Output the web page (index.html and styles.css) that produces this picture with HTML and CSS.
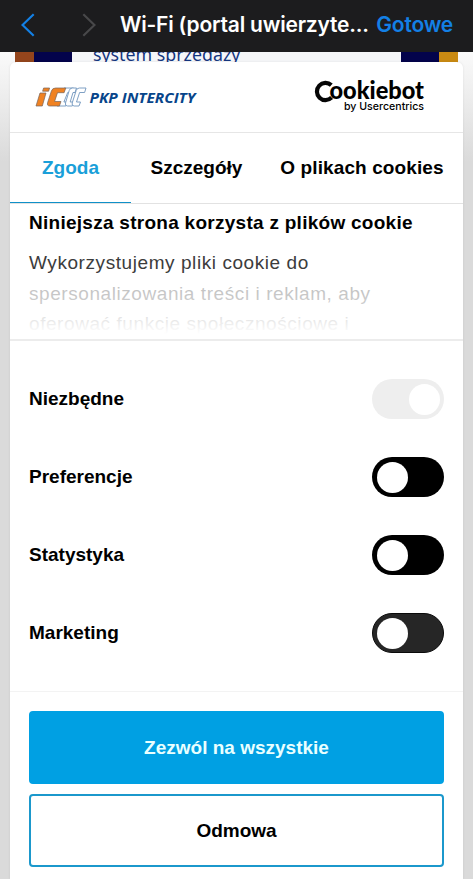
FILE: index.html
```
<!DOCTYPE html>
<html lang="pl">
  <head>
    <meta charset="UTF-8" />
    <meta name="viewport" content="width=device-width, initial-scale=1.0" />
    <title>Wi-Fi (portal uwierzytelniania)</title>
    <link rel="stylesheet" href="styles.css">
  </head>
  <body>
    <header class="navbar">
      <svg class="chevron back" width="14" height="24" viewBox="0 0 14 24">
        <path d="M12.7 1.3 1.5 12l11.2 10.7" />
      </svg>
      <svg class="chevron forward" width="14" height="24" viewBox="0 0 14 24">
        <path d="M1.3 1.3 12.5 12 1.3 22.7" />
      </svg>
      <div class="navbar-title">Wi-Fi (portal uwierzyte...</div>
      <a class="navbar-done">Gotowe</a>
    </header>

    <main class="page">
      <div class="banner">
        <span class="block brown"></span>
        <span class="block navy"></span>
        <span class="banner-text">system sprzedaży</span>
        <span class="block navy"></span>
        <span class="block gold"></span>
      </div>

      <div class="dialog">
        <div class="dialog-header">
          <svg class="logo" width="164" height="24" viewBox="0 0 164 24">
            <g class="logo-outline">
              <path d="M29 3h9.500l-1.800 4.500h-4L28.900 17h3.600l-1.700 4H22" />
              <path d="M41.500 3h-4q-2.500 0-3.300 2.500L30.500 18q-.8 3 2 3h4.800l1.500-4h-3.600L38 7.500h2z" />
              <path d="M51 3h-6.500q-2.500 0-3.300 2.500L37.200 18q-.8 3 2 3h4.800l1.500-4h-4L44.600 7.500h5z" />
            </g>
            <g class="logo-orange">
              <path d="M5 8h6L7.300 21H1z" />
              <path d="M8.600 3h6l-1 3.200h-6z" />
              <path d="M20.500 3h10.300l-1.700 4.700h-6.600L19.600 16.500h6.400L24.400 21H15q-3.300 0-2.400-3.300L16.400 6q1-3 4.100-3z" />
            </g>
            <text class="logo-text" x="54.500" y="17.500" textLength="106" lengthAdjust="spacingAndGlyphs">PKP INTERCITY</text>
          </svg>
          <svg class="cookiebot" width="112" height="36" viewBox="0 0 112 36">
            <path class="cookiebot-c" d="M17.300 5.100A8.600 8.600 0 1 0 17.600 17.600" />
            <text class="cookiebot-name" x="15.500" y="19" textLength="94.500" lengthAdjust="spacingAndGlyphs">ookiebot</text>
            <text class="cookiebot-by" x="30" y="30" textLength="80" lengthAdjust="spacingAndGlyphs">by Usercentrics</text>
          </svg>
        </div>

        <nav class="tabs">
          <a class="tab active">Zgoda</a>
          <a class="tab details">Szczegóły</a>
          <a class="tab about">O plikach cookies</a>
        </nav>

        <section class="intro">
          <h2>Niniejsza strona korzysta z plików cookie</h2>
          <p>Wykorzystujemy pliki cookie do<br />spersonalizowania treści i reklam, aby<br />oferować funkcje społecznościowe i</p>
        </section>

        <section class="options">
          <div class="option">
            <span>Niezbędne</span>
            <span class="switch disabled"></span>
          </div>
          <div class="option">
            <span>Preferencje</span>
            <span class="switch"></span>
          </div>
          <div class="option">
            <span>Statystyka</span>
            <span class="switch"></span>
          </div>
          <div class="option">
            <span>Marketing</span>
            <span class="switch pressed"></span>
          </div>
        </section>

        <footer class="actions">
          <button class="button primary">Zezwól na wszystkie</button>
          <button class="button">Odmowa</button>
        </footer>
      </div>
    </main>
  </body>
</html>
```

FILE: styles.css
```
* {
  box-sizing: border-box;
}

body {
  margin: 0;
  height: 879px;
  overflow: hidden;
  display: flex;
  flex-direction: column;
  font-family: "Liberation Sans", Arial, sans-serif;
  background-color: #dadada;
}

.navbar {
  height: 52px;
  flex: none;
  display: flex;
  align-items: center;
  padding: 0 20px 3px 21px;
  background-color: #1c1c1e;
  font-family: Inter, sans-serif;
  font-size: 21px;
  white-space: nowrap;
}

.chevron {
  fill: none;
  stroke-width: 2.2;
}

.back {
  stroke: #1380e6;
}

.forward {
  stroke: #48484a;
  margin-left: 47px;
}

.navbar-title {
  width: 248px;
  margin-left: 24px;
  color: #fff;
  font-weight: 600;
  letter-spacing: -0.2px;
}

.navbar-done {
  margin-left: auto;
  color: #1380e6;
  font-weight: 600;
  letter-spacing: -0.2px;
}

.page {
  position: relative;
  flex: 1;
  background: linear-gradient(#fafafa, #dadada 110px);
}

.banner {
  display: flex;
  height: 14px;
  margin: 0 15px;
  background-color: #f5f6f8;
  overflow: hidden;
}

.block {
  width: 38px;
}

.brown {
  width: 19px;
  background-color: #94451c;
}

.navy {
  background-color: #03034b;
}

.gold {
  width: 19px;
  background-color: #c98a12;
}

.banner-text {
  flex: 1;
  padding-left: 21px;
  color: #14357f;
  font-family: "Noto Sans", sans-serif;
  font-size: 17.8px;
  line-height: 24px;
  margin-top: -10px;
}

.dialog {
  position: absolute;
  top: 10px;
  left: 10px;
  right: 10px;
  bottom: 0;
  display: flex;
  flex-direction: column;
  background-color: #fff;
  border-radius: 6px 6px 0 0;
  box-shadow: 0 0 3px rgba(0, 0, 0, 0.08);
  font-size: 19px;
}

.dialog-header {
  height: 71px;
  display: flex;
  justify-content: space-between;
  align-items: flex-start;
  padding: 18px 37px 0 25px;
  border-bottom: 1px solid #e6e6e6;
}

.logo {
  margin-top: 5px;
}

.logo-orange {
  fill: #f08222;
  stroke: #76635a;
  stroke-width: 0.7;
}

.logo-outline {
  fill: #fff;
  stroke: #7195bd;
  stroke-width: 0.9;
}

.logo-text {
  fill: #07458a;
  font: italic bold 15px "Open Sans", sans-serif;
}

.cookiebot {
  overflow: visible;
}

.cookiebot-c {
  fill: none;
  stroke: #050505;
  stroke-width: 4.2;
}

.cookiebot-name {
  font: 900 24px Lato, sans-serif;
}

.cookiebot-by {
  font: 500 11px Inter, sans-serif;
}

.tabs {
  height: 71px;
  display: flex;
  border-bottom: 1px solid #e2e2e2;
  font-weight: bold;
  line-height: 70px;
  white-space: nowrap;
}

.tab {
  height: 70px;
  text-align: center;
}

.active {
  width: 121px;
  color: #1a9fd9;
  border-bottom: 1px solid #1090c8;
}

.details {
  width: 131px;
}

.about {
  width: 200px;
  letter-spacing: 0.1px;
}

.intro {
  position: relative;
  height: 137px;
  padding: 4px 19px 0;
  border-bottom: 2px solid #ececec;
  overflow: hidden;
  white-space: nowrap;
}

.intro::after {
  content: "";
  position: absolute;
  inset: 72px 0 0;
  background: linear-gradient(rgba(255, 255, 255, 0.65), rgba(255, 255, 255, 0.75) 45%, #fff 92%);
}

.intro h2 {
  margin: 0;
  font-size: 19px;
  line-height: 30px;
  letter-spacing: 0.27px;
}

.intro p {
  margin: 10px 0 0;
  color: #3c3c3c;
  font-size: 19px;
  line-height: 30.5px;
  letter-spacing: 0.57px;
}

.options {
  height: 351px;
  padding: 19px 19px 0;
  border-bottom: 1px solid #f3f3f3;
}

.option {
  height: 78px;
  display: flex;
  justify-content: space-between;
  align-items: center;
  font-weight: bold;
}

.switch {
  width: 72px;
  height: 40px;
  padding: 5px;
  border-radius: 20px;
  background-color: #000;
}

.switch::before {
  content: "";
  display: block;
  width: 31px;
  height: 31px;
  border-radius: 50%;
  background-color: #fff;
}

.switch.disabled {
  background-color: #eee;
}

.switch.disabled::before {
  margin-left: 32px;
}

.switch.pressed {
  background-color: #262626;
  border: 1px solid #0a0a0a;
  padding: 4px;
}

.actions {
  display: flex;
  flex-direction: column;
  gap: 10px;
  padding: 19px 19px 0;
}

.button {
  height: 73px;
  padding: 0;
  border: 2px solid #1b98cc;
  border-radius: 4px;
  background-color: #fff;
  color: #000;
  font: bold 19px "Liberation Sans", Arial, sans-serif;
}

.primary {
  border-color: #00a0e3;
  background-color: #00a0e3;
  color: #e9ffff;
}
```
